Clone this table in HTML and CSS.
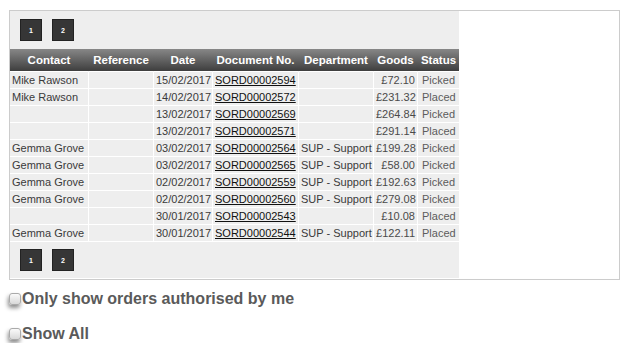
FILE: index.html
```html
<!DOCTYPE html>
<html>
<head>
<meta charset="utf-8">
<link rel="stylesheet" href="styles.css">
</head>
<body>
<div class="panel">
  <div class="grid">
    <div class="pager">
      <span class="pg">1</span>
      <span class="pg">2</span>
    </div>
    <table class="orders">
      <thead>
        <tr>
          <th class="c-contact">Contact</th>
          <th class="c-ref">Reference</th>
          <th class="c-date">Date</th>
          <th class="c-doc">Document No.</th>
          <th class="c-dept">Department</th>
          <th class="c-goods">Goods</th>
          <th class="c-status">Status</th>
        </tr>
      </thead>
      <tbody>
        <tr><td>Mike Rawson</td><td></td><td>15/02/2017</td><td><a href="#">SORD00002594</a></td><td></td><td class="num">£72.10</td><td class="st">Picked</td></tr>
        <tr><td>Mike Rawson</td><td></td><td>14/02/2017</td><td><a href="#">SORD00002572</a></td><td></td><td class="num">£231.32</td><td class="st">Placed</td></tr>
        <tr><td></td><td></td><td>13/02/2017</td><td><a href="#">SORD00002569</a></td><td></td><td class="num">£264.84</td><td class="st">Picked</td></tr>
        <tr><td></td><td></td><td>13/02/2017</td><td><a href="#">SORD00002571</a></td><td></td><td class="num">£291.14</td><td class="st">Placed</td></tr>
        <tr><td>Gemma Grove</td><td></td><td>03/02/2017</td><td><a href="#">SORD00002564</a></td><td>SUP - Support</td><td class="num">£199.28</td><td class="st">Picked</td></tr>
        <tr><td>Gemma Grove</td><td></td><td>03/02/2017</td><td><a href="#">SORD00002565</a></td><td>SUP - Support</td><td class="num">£58.00</td><td class="st">Picked</td></tr>
        <tr><td>Gemma Grove</td><td></td><td>02/02/2017</td><td><a href="#">SORD00002559</a></td><td>SUP - Support</td><td class="num">£192.63</td><td class="st">Picked</td></tr>
        <tr><td>Gemma Grove</td><td></td><td>02/02/2017</td><td><a href="#">SORD00002560</a></td><td>SUP - Support</td><td class="num">£279.08</td><td class="st">Picked</td></tr>
        <tr><td></td><td></td><td>30/01/2017</td><td><a href="#">SORD00002543</a></td><td></td><td class="num">£10.08</td><td class="st">Placed</td></tr>
        <tr><td>Gemma Grove</td><td></td><td>30/01/2017</td><td><a href="#">SORD00002544</a></td><td>SUP - Support</td><td class="num">£122.11</td><td class="st">Placed</td></tr>
      </tbody>
    </table>
    <div class="pager pager-bottom">
      <span class="pg">1</span>
      <span class="pg">2</span>
    </div>
  </div>
</div>
<div class="opts">
  <label class="opt"><input type="checkbox" class="cb"><span>Only show orders authorised by me</span></label>
  <label class="opt"><input type="checkbox" class="cb"><span>Show All</span></label>
</div>
</body>
</html>
```
FILE: styles.css
```css
html, body {
  margin: 0;
  padding: 0;
  background: #fff;
  font-family: "Liberation Sans", Arial, sans-serif;
}

.panel {
  box-sizing: border-box;
  width: 611px;
  margin: 10px 0 0 9px;
  border: 1px solid #cccccc;
  padding: 0 0 1px 0;
}

.grid {
  width: 449px;
  background: #eeeeee;
}

.pager {
  display: flex;
  gap: 10px;
  padding: 8px 0 8px 10px;
}

.pager-bottom {
  padding: 7px 0 7px 10px;
}

.pg {
  box-sizing: border-box;
  width: 22px;
  height: 22px;
  display: flex;
  align-items: center;
  justify-content: center;
  background: #363636;
  border: 1px solid #222;
  color: #fff;
  font-size: 7px;
  font-weight: bold;
}

.orders {
  width: 449px;
  table-layout: fixed;
  border-collapse: separate;
  border-spacing: 0;
}

.orders th {
  box-sizing: border-box;
  padding: 0;
  line-height: 22px;
  font-size: 11.5px;
  font-weight: bold;
  color: #fff;
  text-align: center;
  white-space: nowrap;
  background: linear-gradient(to bottom, #878787, #3e3e3e);
  border-bottom: 1px solid #fff;
  border-right: 1px solid transparent;
}

.orders th:last-child { border-right: 0; }

.c-contact { width: 79px; }
.c-ref { width: 65px; }
.c-date { width: 59px; }
.c-doc { width: 86px; }
.c-dept { width: 75px; }
.c-goods { width: 44px; }
.c-status { width: 41px; }

.orders td {
  padding: 1px 2px;
  line-height: 14px;
  font-size: 11px;
  color: #3a3a3a;
  white-space: nowrap;
  overflow: hidden;
  background: #eeeeee;
  border-right: 1px solid #fff;
  border-bottom: 1px solid #fff;
}

.orders td:last-child { border-right: 0; }

.orders td a {
  color: #111;
  text-decoration: underline;
}

.orders td.num {
  text-align: right;
  color: #4a4a4a;
}

.orders td.st {
  padding-left: 4px;
  color: #5c5c5c;
}

.opts {
  display: flex;
  flex-direction: column;
  gap: 17px;
  padding: 10px 0 0 9px;
}

.opt {
  display: flex;
  align-items: center;
  height: 18px;
  font-size: 16px;
  font-weight: bold;
  color: #5a5a5a;
}

.cb {
  appearance: none;
  -webkit-appearance: none;
  box-sizing: border-box;
  width: 12px;
  height: 12px;
  margin: 0 1px 0 0;
  border: 1px solid #aaa;
  border-radius: 3px;
  background: linear-gradient(to bottom, #fafafa, #d8d8d8);
  box-shadow: -1px 3px 4px rgba(0, 0, 0, 0.45);
}
```
